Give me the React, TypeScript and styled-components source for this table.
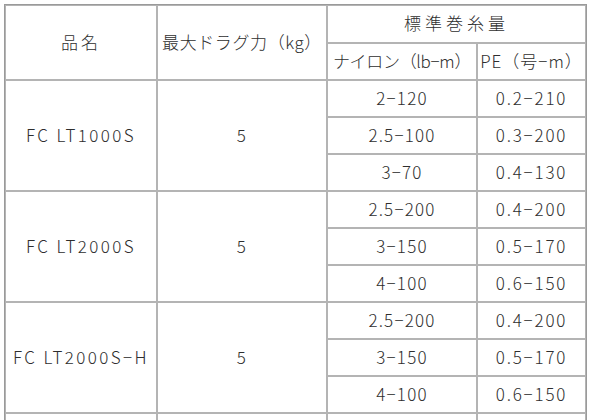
import React from 'react';
import styled, { createGlobalStyle } from 'styled-components';

type Group = {
  name: string;
  drag: string;
  lines: [string, string][];
};

const groups: Group[] = [
  { name: 'FC LT1000S', drag: '5', lines: [['2−120', '0.2−210'], ['2.5−100', '0.3−200'], ['3−70', '0.4−130']] },
  { name: 'FC LT2000S', drag: '5', lines: [['2.5−200', '0.4−200'], ['3−150', '0.5−170'], ['4−100', '0.6−150']] },
  { name: 'FC LT2000S−H', drag: '5', lines: [['2.5−200', '0.4−200'], ['3−150', '0.5−170'], ['4−100', '0.6−150']] },
];

const App: React.FC = () => {
  return (
    <>
      <GlobalStyle />
      <Page>
        <SpecTable>
          <colgroup>
            <col style={{ width: 152 }} />
            <col style={{ width: 170 }} />
            <col style={{ width: 150 }} />
            <col style={{ width: 109 }} />
          </colgroup>
          <thead>
            <tr>
              <Cell rowSpan={2} $ls={3}>品名</Cell>
              <Cell rowSpan={2} $ls={0.6}>最大ドラグ力（kg）</Cell>
              <Cell colSpan={2} $h={38} $ls={4}>標準巻糸量</Cell>
            </tr>
            <tr>
              <Cell $h={37} $ls={-0.3}>ナイロン（lb−m）</Cell>
              <Cell $h={37} $ls={1}>PE（号−m）</Cell>
            </tr>
          </thead>
          <tbody>
            {groups.map((g) =>
              g.lines.map((line, i) => (
                <tr key={g.name + i}>
                  {i === 0 && <Cell rowSpan={g.lines.length} $ls={2.4}>{g.name}</Cell>}
                  {i === 0 && <Cell rowSpan={g.lines.length}>{g.drag}</Cell>}
                  <Cell $h={37}>{line[0]}</Cell>
                  <Cell $h={37} $ls={1.8}>{line[1]}</Cell>
                </tr>
              ))
            )}
            {/* next model starts below the fold: only its borders show */}
            <tr>
              <Cell $h={37} />
              <Cell $h={37} />
              <Cell $h={37} />
              <Cell $h={37} />
            </tr>
          </tbody>
        </SpecTable>
      </Page>
    </>
  );
};

const GlobalStyle = createGlobalStyle`
  html, body {
    margin: 0;
    padding: 0;
    background: #ffffff;
    overflow: hidden;
  }
`;

const Page = styled.div`
  width: 592px;
  height: 420px;
  overflow: hidden;
  padding: 4px 0 0 4px;
  box-sizing: border-box;
  font-family: "Noto Sans CJK JP", "Noto Sans", sans-serif;
  font-size: 17px;
  font-weight: 300;
  color: #2e2e2e;
`;

const SpecTable = styled.table`
  width: 582px;
  table-layout: fixed;
  border-collapse: separate;
  border-spacing: 0;
  border: 1px solid #9a9a9a;
`;

const Cell = styled.td<{ $h?: number; $ls?: number }>`
  border: 1px solid #b4b4b4;
  padding: 0 0 2px;
  text-align: center;
  vertical-align: middle;
  white-space: nowrap;
  line-height: 20px;
  letter-spacing: ${(p) => (p.$ls ?? 1.2)}px;
  height: ${(p) => (p.$h ? `${p.$h - 4}px` : 'auto')};
`;

export default App;
